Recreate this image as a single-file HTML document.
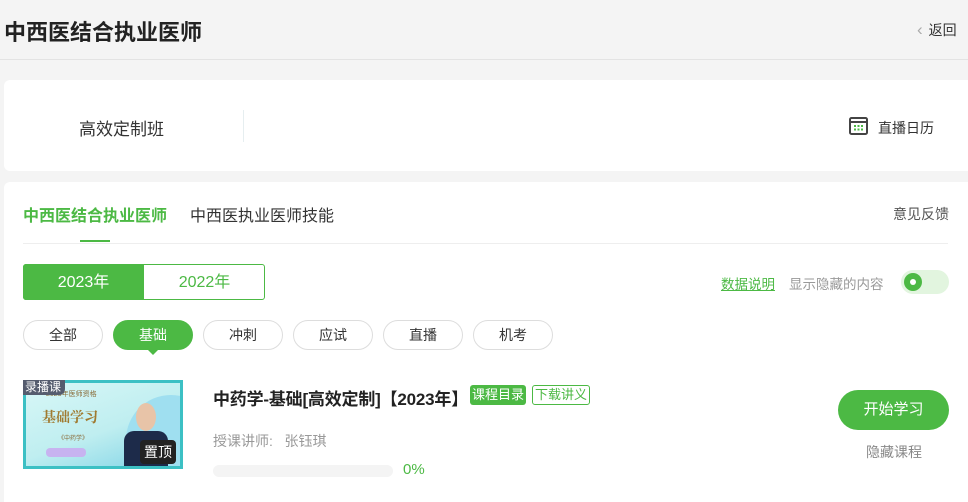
<!DOCTYPE html>
<html><head><meta charset="utf-8"><style>
*{margin:0;padding:0;box-sizing:border-box}
body{width:968px;height:497px;overflow:hidden;background:#f4f4f4;font-family:"Liberation Sans","Noto Sans CJK SC",sans-serif;position:relative;color:#333}
.a{position:absolute}
.pill{position:absolute;top:320px;width:80px;height:30px;border:1px solid #ddd;border-radius:15px;background:#fff;font-size:14px;text-align:center;line-height:28px;color:#333}
</style></head><body>
<div class="a" style="left:4px;top:15px;font-size:22px;font-weight:bold;color:#222">中西医结合执业医师</div>
<div class="a" style="left:917px;top:20px;font-size:14px;color:#333"><span style="color:#aaa;margin-right:6px;font-size:17px">&#8249;</span>返回</div>
<div class="a" style="left:0;top:59px;width:968px;height:1px;background:#e3e3e3"></div>
<div class="a" style="left:4px;top:80px;width:964px;height:91px;background:#fff;border-radius:6px 0 0 6px"></div>
<div class="a" style="left:79px;top:115px;font-size:17px;color:#333">高效定制班</div>
<div class="a" style="left:243px;top:110px;width:1px;height:32px;background:#e6eef0"></div>
<svg class="a" style="left:849px;top:117px" width="19" height="18" viewBox="0 0 19 18"><rect x="1" y="1" width="17" height="16" rx="1.5" fill="none" stroke="#444" stroke-width="2"/><rect x="1" y="4" width="17" height="2" fill="#444"/><g fill="#4cb944"><rect x="5" y="8" width="2" height="2"/><rect x="8.5" y="8" width="2" height="2"/><rect x="12" y="8" width="2" height="2"/><rect x="5" y="11.5" width="2" height="2"/><rect x="8.5" y="11.5" width="2" height="2"/><rect x="12" y="11.5" width="2" height="2"/></g></svg>
<div class="a" style="left:878px;top:118px;font-size:14px;color:#333">直播日历</div>
<div class="a" style="left:4px;top:182px;width:964px;height:320px;background:#fff;border-radius:6px 0 0 0"></div>
<div class="a" style="left:23px;top:202px;font-size:16px;font-weight:bold;color:#4cb944">中西医结合执业医师</div>
<div class="a" style="left:190px;top:202px;font-size:16px;color:#333">中西医执业医师技能</div>
<div class="a" style="left:893px;top:204px;font-size:14px;color:#555">意见反馈</div>
<div class="a" style="left:80px;top:240px;width:30px;height:2px;background:#4cb944"></div>
<div class="a" style="left:23px;top:243px;width:925px;height:1px;background:#eee"></div>
<div class="a" style="left:23px;top:264px;width:242px;height:36px;border:1px solid #4cb944;border-radius:3px"></div>
<div class="a" style="left:23px;top:264px;width:121px;height:36px;background:#4cb944;border-radius:3px 0 0 3px;color:#fff;font-size:16px;text-align:center;line-height:37px">2023年</div>
<div class="a" style="left:144px;top:264px;width:121px;height:36px;color:#4cb944;font-size:16px;text-align:center;line-height:37px">2022年</div>
<div class="a" style="left:721px;top:273px;font-size:13.5px;color:#4cb944;text-decoration:underline">数据说明</div>
<div class="a" style="left:789px;top:273px;font-size:13.5px;color:#999">显示隐藏的内容</div>
<div class="a" style="left:901px;top:270px;width:48px;height:24px;border-radius:12px;background:#e2f5df"></div>
<div class="a" style="left:904px;top:273px;width:18px;height:18px;border-radius:50%;background:#4cb944"></div>
<div class="a" style="left:910px;top:279px;width:6px;height:6px;border-radius:50%;background:#fff"></div>
<div class="pill" style="left:23px">全部</div>
<div class="pill" style="left:113px;background:#4cb944;border-color:#4cb944;color:#fff">基础</div>
<div class="a" style="left:147px;top:349px;width:0;height:0;border:6px solid transparent;border-top-color:#4cb944"></div>
<div class="pill" style="left:203px">冲刺</div>
<div class="pill" style="left:293px">应试</div>
<div class="pill" style="left:383px">直播</div>
<div class="pill" style="left:473px">机考</div>
<div class="a" style="left:23px;top:380px;width:160px;height:89px;background:linear-gradient(160deg,#d8f7f7 0%,#bfeef0 55%,#7fd3e6 100%);border:3px solid #3cc0c4;overflow:hidden">
<div class="a" style="left:100px;top:12px;width:90px;height:90px;border-radius:50%;background:#9fdff0"></div>
<div class="a" style="left:20px;top:6px;font-size:7px;color:#8a6d3b">2023年医师资格</div>
<div class="a" style="left:16px;top:24px;font-size:14px;font-weight:bold;color:#a07a30;font-family:'Noto Serif CJK SC',serif">基础学习</div>
<div class="a" style="left:32px;top:50px;font-size:6px;color:#8a6d3b">《中药学》</div>
<div class="a" style="left:20px;top:65px;width:40px;height:9px;border-radius:4px;background:#c7b3f0"></div>
<div class="a" style="left:98px;top:48px;width:44px;height:45px;background:#1d2b4a;border-radius:10px 10px 0 0"></div>
<div class="a" style="left:110px;top:20px;width:20px;height:28px;border-radius:50%;background:#e8c4a8"></div>
</div>
<div class="a" style="left:23px;top:380px;width:42px;height:15px;background:#555c6e;border-radius:0 0 6px 0;color:#fff;font-size:12px;line-height:15px;padding-left:2px">录播课</div>
<div class="a" style="left:140px;top:440px;width:36px;height:24px;background:#222;border-radius:4px;color:#fff;font-size:14px;line-height:24px;text-align:center">置顶</div>
<div class="a" style="left:213px;top:385px;font-size:17px;font-weight:bold;color:#222;letter-spacing:-0.2px">中药学-基础[高效定制]【2023年】</div>
<div class="a" style="left:470px;top:385px;width:56px;height:20px;background:#4cb944;border-radius:3px;color:#fff;font-size:13px;line-height:20px;text-align:center">课程目录</div>
<div class="a" style="left:532px;top:385px;width:58px;height:20px;border:1px solid #4cb944;border-radius:3px;color:#4cb944;font-size:13px;line-height:18px;text-align:center">下载讲义</div>
<div class="a" style="left:213px;top:431px;font-size:14px;color:#999">授课讲师:&nbsp;&nbsp;&nbsp;张钰琪</div>
<div class="a" style="left:213px;top:465px;width:180px;height:12px;border-radius:6px;background:#f4f4f4"></div>
<div class="a" style="left:403px;top:461px;font-size:15px;color:#4cb944">0%</div>
<div class="a" style="left:838px;top:390px;width:111px;height:40px;border-radius:20px;background:#4cb944;color:#fff;font-size:15px;text-align:center;line-height:40px">开始学习</div>
<div class="a" style="left:866px;top:442px;font-size:14px;color:#888">隐藏课程</div>
</body></html>
